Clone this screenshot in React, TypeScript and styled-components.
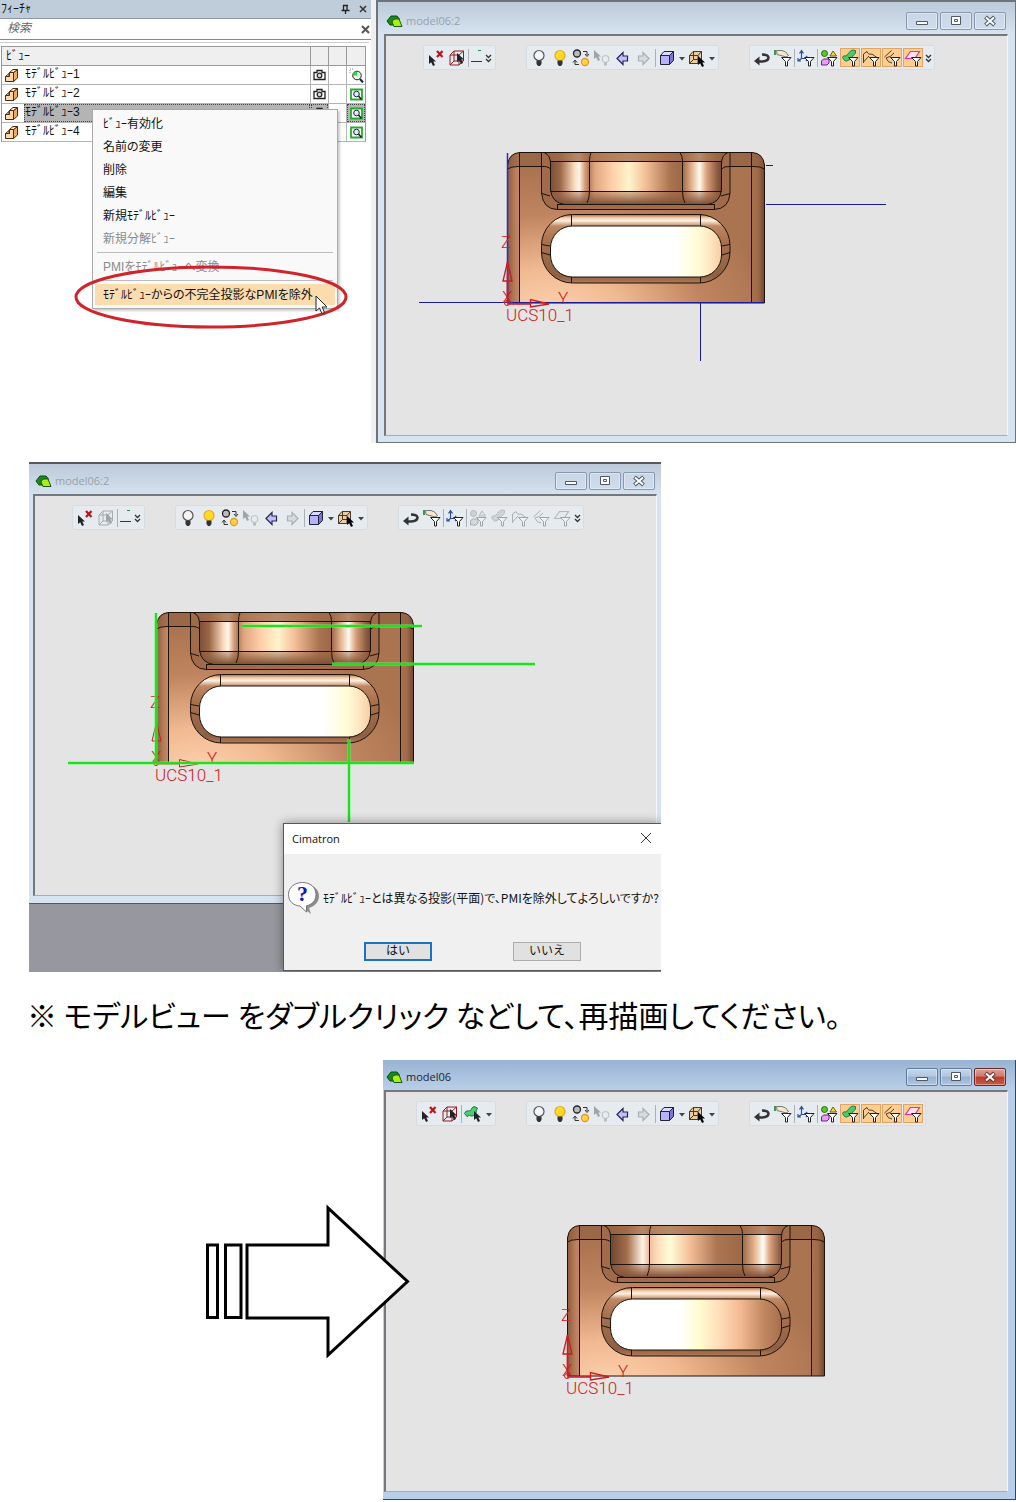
import React from 'react';
import styled, { createGlobalStyle, css } from 'styled-components';

const uiFont = `"Open Sans", "Noto Sans CJK JP", sans-serif`;
const jpFont = `"Liberation Sans", "Noto Sans CJK JP", sans-serif`;
const cjkFont = `"Noto Sans CJK JP", sans-serif`;

const GlobalStyle = createGlobalStyle`
  * { box-sizing: border-box; }
  body { margin: 0; background: #fff; color: #111; font-family: ${jpFont}; font-size: 12px; }
  button, input { font: inherit; color: inherit; }
  svg { display: block; flex: none; }
`;

/* ---------- page ---------- */

const Page = styled.main`
  display: flex;
  flex-direction: column;
  padding-bottom: 2px;
`;

const TopRow = styled.section`
  display: flex;
`;

const MiddleRow = styled.section`
  position: relative;
  margin: 19px 0 0 29px;
  max-width: 632px;
  padding-bottom: 68px;
  background: #97979f;
  overflow: hidden;
`;

const Note = styled.p`
  margin: 0;
  padding: 0 0 4px 27px;
  font-family: ${cjkFont};
  font-size: 30px;
  line-height: 84px;
  white-space: nowrap;
  color: #000;
  font-feature-settings: 'palt';
`;

const BottomRow = styled.section`
  display: flex;
`;

const ArrowArea = styled.div`
  flex: 0 0 383px;
  display: flex;
  justify-content: flex-end;
  padding-top: 144px;
  svg { position: relative; z-index: 1; overflow: visible; margin-right: -27px; }
`;

/* ---------- feature panel ---------- */

const Side = styled.aside`
  position: relative;
  flex: 0 0 376px;
  background: #fff;
  border-right: 5px solid #f0f0f0;
`;

const SideHeader = styled.header`
  display: flex;
  align-items: center;
  height: 19px;
  padding: 0 0 0 1px;
  background: #bfcddb;
  border-bottom: 1px solid #8d99a5;
  font-size: 12px;
  line-height: 16px;
  span { flex: 1; }
`;

const PlainButton = styled.button<{ $w?: number }>`
  display: flex;
  align-items: center;
  justify-content: center;
  width: ${p => p.$w ?? 17}px;
  height: 17px;
  padding: 0;
  border: 0;
  background: none;
`;

const SearchRow = styled.div`
  display: flex;
  align-items: center;
  height: 21px;
  padding-left: 7px;
  border-bottom: 1px solid #888;
`;

const SearchInput = styled.input`
  flex: 1;
  min-width: 0;
  height: 18px;
  padding: 0 0 2px;
  border: 0;
  outline: 0;
  font-size: 12px;
  line-height: 16px;
  &::placeholder { color: #666; font-style: italic; opacity: 1; }
`;

const ListFrame = styled.div`
  margin: 2px 2px 0 0;
  padding: 3px 3px 0 1px;
  border-top: 1px solid #ccc;
`;

const Table = styled.table`
  width: 100%;
  table-layout: fixed;
  border-collapse: separate;
  border-spacing: 0;
  border: 1px solid #999;
  border-bottom: 0;
  th, td {
    height: 19px;
    padding: 0;
    border-right: 1px solid #b4b4b4;
    border-bottom: 1px solid #b4b4b4;
    font-size: 12px;
    font-weight: 400;
    line-height: 16px;
    text-align: left;
  }
  th { background: #efefef; border-color: #999; padding-left: 4px; }
  th:last-child, td:last-child { border-right: 0; }
`;

const NameCol = styled.col``;
const IconCol = styled.col`
  width: 18px;
`;

const NameCell = styled.div`
  display: flex;
  align-items: center;
  height: 18px;
  padding-left: 2px;
`;

const NameText = styled.span<{ $selected?: boolean }>`
  flex: 1;
  height: 18px;
  margin-left: 4px;
  padding-left: 1px;
  ${p => p.$selected && css`
    background: #b4b4b4;
    outline: 1px dotted #444;
    outline-offset: -1px;
  `}
`;

const IconCell = styled.div<{ $selected?: boolean }>`
  display: flex;
  align-items: center;
  justify-content: center;
  height: 18px;
  ${p => p.$selected && css`
    background: #b4b4b4;
    outline: 1px dotted #444;
    outline-offset: -1px;
  `}
`;

const Menu = styled.menu`
  position: absolute;
  left: 92px;
  top: 109px;
  width: 246px;
  margin: 0;
  padding: 2px;
  list-style: none;
  background: #f9f9f9;
  border: 1px solid #aaa;
  box-shadow: 2px 2px 2px #0003;
`;

const MenuItem = styled.button<{ $active?: boolean }>`
  display: block;
  width: 100%;
  height: 23px;
  padding: 0 0 0 8px;
  border: 0;
  border-block: 1px solid transparent;
  background: ${p => (p.$active ? '#fbdcae' : 'none')};
  background-clip: padding-box;
  font-size: 12px;
  line-height: 20px;
  text-align: left;
  white-space: nowrap;
  font-feature-settings: 'palt';
  &:disabled { color: #8b8b8b; }
`;

const MenuRule = styled.li`
  height: 5px;
  margin: 0 2px;
  padding-top: 2px;
  &::before { content: ''; display: block; height: 1px; background: #bdbdbd; }
`;

const Ring = styled.svg`
  position: absolute;
  left: 74px;
  top: 264px;
  z-index: 2;
`;

const Cursor = styled.svg`
  position: absolute;
  left: 315px;
  top: 295px;
  z-index: 3;
`;

/* ---------- document window ---------- */

type FrameKind = 'first' | 'second' | 'third';

const frames = {
  first: css`
    flex: 1;
    border: solid #6e7478;
    border-width: 2px 1px 1px 2px;
    padding: 0 7px 6px 6px;
    background: linear-gradient(#bccad9, #d6e3f0 32px);
  `,
  second: css`
    border: solid #55585c;
    border-width: 2px 0 1px;
    padding: 0 4px 7px 4px;
    background: linear-gradient(#bccad9, #d6e3f0 32px);
  `,
  third: css`
    flex: 1;
    border: solid #2b4a62;
    border-width: 0 1px 1px 0;
    padding: 0 7px 7px 1px;
    background: linear-gradient(#98b3d1, #b9cfe9 30px);
  `,
};

const Frame = styled.article<{ $kind: FrameKind }>`
  min-width: 0;
  ${p => frames[p.$kind]}
`;

const TitleBar = styled.header<{ $kind: FrameKind }>`
  display: flex;
  align-items: center;
  height: ${p => (p.$kind === 'first' ? 32 : 30)}px;
  padding: ${p => (p.$kind === 'first' ? 6 : 4)}px 2px 0;
  font-family: ${uiFont};
  color: ${p => (p.$kind === 'third' ? '#1c2530' : '#98a1aa')};
`;

const Title = styled.h2`
  flex: 1;
  margin: 0 0 0 3px;
  font-size: 11px;
  font-weight: 400;
  line-height: 16px;
`;

const WinButtons = styled.div`
  display: flex;
  gap: 2px;
`;

const WinButton = styled.button<{ $red?: boolean; $strong?: boolean }>`
  display: flex;
  align-items: center;
  justify-content: center;
  width: 32px;
  height: 18px;
  padding: 0;
  border-radius: 2px;
  border: 1px solid ${p => (p.$red ? '#6a2a2c' : p.$strong ? '#607c9c' : '#8798b0')};
  box-shadow: inset 0 0 0 1px #ffffff66;
  background: ${p =>
    p.$red
      ? 'linear-gradient(#dba299, #cf7a6c 45%, #b83c2b 50%, #c85a40)'
      : p.$strong
      ? 'linear-gradient(#c4d6ea, #b2c8e0 45%, #96b1d0 50%, #afc6e2)'
      : 'linear-gradient(#c8d6e5, #cfdceb)'};
`;

const Body = styled.div`
  min-height: 402px;
  padding: 9px 0 0;
  border: solid #74787c;
  border-width: 2px 1px 1px 2px;
  border-right-color: #f4f6f8;
  border-bottom-color: #a7adb3;
  background: #e4e4e4;
  overflow: hidden;
`;

const Toolbars = styled.div<{ $indent: number }>`
  display: flex;
  gap: 30px;
  padding-left: ${p => p.$indent}px;
`;

const Toolbar = styled.div`
  display: flex;
  align-items: center;
  gap: 1px;
  height: 25px;
  padding: 0 2px;
  border: 1px solid #d5dde4;
  border-radius: 2px;
  background: #e6ebf0;
`;

const Tool = styled.button<{ $w?: number; $on?: boolean }>`
  display: flex;
  align-items: center;
  justify-content: center;
  width: ${p => p.$w ?? 20}px;
  height: 19px;
  padding: 0;
  border: ${p => (p.$on ? '1px solid #e2a367' : '0')};
  background: ${p => (p.$on ? '#fdce92' : 'none')};
  svg { flex: none; }
  &:disabled svg { filter: grayscale(1); opacity: 0.35; }
`;

const Divider = styled.span`
  width: 1px;
  height: 18px;
  background: #a9b0b7;
`;

const Canvas = styled.div<{ $left: number; $top: number }>`
  padding: ${p => p.$top}px 0 0 ${p => p.$left}px;
  svg { overflow: visible; }
`;

/* ---------- message box ---------- */

const Dialog = styled.div`
  position: absolute;
  left: 254px;
  right: 0;
  bottom: 1px;
  height: 148px;
  border: 1px solid #55585c;
  border-right: 0;
  background: #f0f0f0;
  box-shadow: 0 0 10px #0006;
`;

const DialogTitle = styled.header`
  display: flex;
  align-items: center;
  justify-content: space-between;
  height: 30px;
  padding: 0 7px 2px 8px;
  background: #fff;
  font-family: ${uiFont};
  font-size: 11px;
`;

const DialogMessage = styled.div`
  display: flex;
  align-items: center;
  gap: 3px;
  height: 88px;
  padding-left: 3px;
  font-family: ${cjkFont};
  font-size: 12px;
  line-height: 16px;
  white-space: nowrap;
  font-feature-settings: 'palt';
`;

const DialogButtons = styled.div`
  display: flex;
  gap: 81px;
  padding-left: 80px;
`;

const DialogButton = styled.button<{ $primary?: boolean }>`
  width: 68px;
  height: 19px;
  padding: 0 0 2px;
  border: ${p => (p.$primary ? '2px solid #1b74bb' : '1px solid #adadad')};
  background: #e1e1e1;
  font-size: 12px;
  line-height: 12px;
`;

/* ---------- icons ---------- */

const Icon = ({ children, w = 18, h = 18 }: { children: React.ReactNode; w?: number; h?: number }) => (
  <svg width={w} height={h} viewBox={`0 0 ${w} ${h}`} fill="none" aria-hidden="true">{children}</svg>
);

const Pointer = ({ x, y, fill = '#222' }: { x: number; y: number; fill?: string }) => (
  <path transform={`translate(${x} ${y})`} d="M0 0V9L2.200 7.200L4 11L6 10L4.300 6.500H7Z" fill={fill} />
);

const Funnel = () => (
  <path d="M7.500 8.500H17L13.500 12.500V17H11.500V12.500Z" fill="#fff" stroke="#222" />
);

const DeselectIcon = () => (
  <Icon><Pointer x={2} y={6} /><path d="M10 2L15.500 8M15.500 2L10 8" stroke="#b8141c" strokeWidth="2.200" /></Icon>
);

const BoxSelectIcon = () => (
  <Icon>
    <path d="M2 6H11V16H2ZM2 6L6 2H15.500L11 6M15.500 2V12L11 16M6 2V12H15M6 12L2 16" stroke="#8d1d24" />
    <Pointer x={9} y={4} />
  </Icon>
);

const SurfaceSelectIcon = () => (
  <Icon w={20}>
    <path d="M1.500 8.500Q3 5 5 6Q8 7 9 3L11 1.500L14.500 3Q13 5 13 8Q11 12 8 11Q5 9 4.500 12Z" fill="#49cf78" stroke="#1a7a3a" />
    <Pointer x={11} y={6} />
  </Icon>
);

const LineIcon = () => (
  <Icon w={13}><path d="M1 12.500H12" stroke="#333" /><path d="M8 1.500H11" stroke="#2a8a4a" /></Icon>
);

const ChevronsIcon = () => (
  <Icon w={9}><path d="M2 6L4.500 8.500L7 6M2 10L4.500 12.500L7 10" stroke="#333" strokeWidth="1.300" /></Icon>
);

const CaretIcon = () => (
  <Icon w={8}><path d="M1 8H7L4 11.500Z" fill="#444" /></Icon>
);

const BulbIcon = ({ lit }: { lit?: boolean }) => (
  <Icon>
    <circle cx="9" cy="6.500" r="5" fill={lit ? '#ffdc22' : '#f4f4f4'} stroke={lit ? '#eda52a' : '#555'} strokeWidth="1.200" />
    <path d="M6.500 11.500H11.500V15L10 17H8L6.500 15Z" fill="#333" />
  </Icon>
);

const SwapIcon = () => (
  <Icon>
    <circle cx="5" cy="4.500" r="3.500" fill="#bbb" stroke="#222" strokeWidth="1.300" />
    <circle cx="13" cy="13" r="3.500" fill="#ffd44a" stroke="#e8962a" strokeWidth="1.300" />
    <path d="M11 2.500H15V6M13 5L15 7.500L17 5M7 15.500H3V12M1 13.500L3 11L5 13.500" stroke="#333" />
  </Icon>
);

const PointBulbIcon = () => (
  <Icon>
    <Pointer x={1} y={1} />
    <circle cx="12.500" cy="10" r="3.500" stroke="#666" />
    <path d="M11 13.500H14V16.500H11Z" fill="#666" />
  </Icon>
);

const ArrowIcon = ({ right }: { right?: boolean }) => (
  <Icon>
    <path
      transform={right ? 'translate(17 0) scale(-1 1)' : undefined}
      d="M3 9.500L9 3.500V7H13.500V12H9V15.500Z"
      fill={right ? '#bbb' : '#c3bdff'}
      stroke={right ? '#444' : '#262650'}
      strokeWidth="1.200"
    />
  </Icon>
);

const CubeIcon = () => (
  <Icon>
    <path d="M2.500 6.500H11.500V15.500H2.500Z" fill="#b8b2fb" stroke="#222238" />
    <path d="M2.500 6.500L6 2.500H15.500L11.500 6.500Z" fill="#dcd9ff" stroke="#222238" />
    <path d="M11.500 6.500L15.500 2.500V11.500L11.500 15.500Z" fill="#7c74d8" stroke="#222238" />
  </Icon>
);

const CubePickIcon = () => (
  <Icon>
    <path d="M1 6.500L5 2.500H13.500V11L10 14.500H1Z" fill="#e9cca2" />
    <path d="M1.500 6.500H10V14.500H1.500ZM1.500 6.500L5 2.500H13.500L10 6.500M13.500 2.500V11L10 14.500M5.500 2.500V10.500H13M5.500 10.500L1.500 14.500" stroke="#4a3824" />
    <Pointer x={10} y={7} fill="#000" />
  </Icon>
);

const ReturnIcon = () => (
  <Icon>
    <path d="M5 12.500H9Q15.500 12 15.500 8.500Q15 5.500 9 5.500" stroke="#333" strokeWidth="2.500" />
    <path d="M1 12L6.500 7.500V16.500Z" fill="#333" />
  </Icon>
);

const HandFilterIcon = () => (
  <Icon>
    <path d="M0 1H2V6H0Z" fill="#3a9a4a" />
    <path d="M2.500 1.500H8Q12 2 14.500 6.500L12 8L7 6.500L3 5.500Z" fill="#f5e6cf" stroke="#777" />
    <Funnel />
  </Icon>
);

const AxesFilterIcon = () => (
  <Icon>
    <path d="M4.500 2V9.500H11M4.500 9.500L1 12M2.500 4.500L4.500 1.500L6.500 4.500M9 7L11.500 9.500L9 12M1 9V12H4" stroke="#2c4fa0" strokeWidth="1.200" />
    <Funnel />
  </Icon>
);

const ShapesFilterIcon = () => (
  <Icon>
    <circle cx="4.500" cy="4.500" r="3" fill="#5dc81e" stroke="#2a6a10" />
    <path d="M10 7L13 2L16.500 7Z" fill="#f0dc3c" stroke="#6a5c10" />
    <path d="M1.500 12L3.500 10H9V14L7 16H1.500Z" fill="#e3a2f0" stroke="#7a1a90" />
    <Funnel />
  </Icon>
);

const SurfaceFilterIcon = () => (
  <Icon>
    <path d="M1.500 8.500Q2 6 5 7L10 1.500Q12 0.500 14.500 1.500V4L8 11Q5 13 3.500 11.500Z" fill="#4fc968" stroke="#23803a" />
    <Funnel />
  </Icon>
);

const CurveFilterIcon = () => (
  <Icon><path d="M1.500 14V5L5 2.500Q6 6 10 5L15.500 9M1.500 13L7 7" stroke="#4a3c2a" /><Funnel /></Icon>
);

const EdgeFilterIcon = () => (
  <Icon><path d="M1.500 8L8.500 1.500M3 9Q8 8 11 4M3 9Q5 14 9 14" stroke="#4a3c2a" /><Funnel /></Icon>
);

const PlaneFilterIcon = () => (
  <Icon><path d="M1.500 9.500L6.500 2.500H15.500L11 9.500Z" fill="#fbe0ee" stroke="#e0309a" strokeWidth="1.200" /><Funnel /></Icon>
);

const LogoIcon = () => (
  <Icon w={17} h={14}>
    <path d="M1 7L5 2H11L13.500 5L8 11H4Z" fill="#168a20" stroke="#0a4a10" />
    <path d="M6 8Q7 5 9 5H13L16 12.500H8Z" fill="#a8f01a" stroke="#1c5a10" />
  </Icon>
);

const PartIcon = () => (
  <Icon w={16} h={16}>
    <path d="M1.500 9.500L5.500 9.500V5.500H9.500L9.500 14.500H1.500Z" fill="#ffd9ae" stroke="#4a2a10" />
    <path d="M9.500 14.500V5.500L13.500 2.500V11Z" fill="#f5a95c" stroke="#4a2a10" />
    <path d="M5.500 5.500L9 2.500H13.500L9.500 5.500ZM1.500 9.500L5 6.500V9.500Z" fill="#ffe9d0" stroke="#4a2a10" />
  </Icon>
);

const CameraIcon = () => (
  <Icon w={13} h={13}>
    <path d="M1 3.500H4V1.500H9V3.500H12V10.500H1Z" fill="#fff" stroke="#222" strokeWidth="1.300" />
    <circle cx="6.500" cy="6.500" r="2.300" fill="#ddd" stroke="#222" strokeWidth="1.300" />
  </Icon>
);

const ViewIcon = () => (
  <Icon w={13} h={13}>
    <path d="M1 1.500H12V11.500H1Z" fill="#fff" stroke="#1fae2c" strokeWidth="1.800" />
    <circle cx="6.500" cy="6" r="2.800" fill="#d9ecfa" stroke="#222" />
    <path d="M8.500 8L11.500 11.500" stroke="#222" strokeWidth="1.600" />
  </Icon>
);

const ZoomViewIcon = () => (
  <Icon w={15} h={15}>
    <path d="M1 5V1H5" stroke="#999" strokeDasharray="1 1" />
    <circle cx="8" cy="7.500" r="4.300" fill="#e4f8e4" stroke="#223" />
    <path d="M8 3.500A4 4 0 0 0 4 7.500H8Z" fill="#22dd33" />
    <path d="M11 11L14 14.500" stroke="#222" strokeWidth="2" />
  </Icon>
);

const CloseMark = ({ size = 9, color = '#333', width = 1.5 }: { size?: number; color?: string; width?: number }) => (
  <Icon w={size} h={size}>
    <path d={`M1 1L${size - 1} ${size - 1}M${size - 1} 1L1 ${size - 1}`} stroke={color} strokeWidth={width} />
  </Icon>
);

const QuestionIcon = () => (
  <svg width="33" height="34" viewBox="0 0 33 34" aria-hidden="true">
    <path d="M17 3C26 3 32 8 32 15C32 21 28 25 22 27L24 33L16 27Z" fill="#8d8d8d" />
    <path d="M15.500 1.500C23 1.500 29 6 29 13.500C29 20 25 23.500 19.500 24.800V31L13 25C6 24.500 1.500 20 1.500 13.500C1.500 6 8 1.500 15.500 1.500Z" fill="#fff" stroke="#777" />
    <text x="15.500" y="20" textAnchor="middle" fontFamily="Liberation Serif, serif" fontWeight="700" fontSize="22" fill="#1414c8">?</text>
  </svg>
);

/* ---------- model drawing ---------- */

type Stop = [number, string];
const Stops = ({ list }: { list: Stop[] }) => (
  <>{list.map(([o, c], i) => <stop key={i} offset={o} stopColor={c} />)}</>
);

const pocketNear: Stop[] = [
  [0, '#7a4f37'], [0.06, '#9b6848'], [0.14, '#f8d8bc'], [0.17, '#fff6ea'], [0.2, '#dba47e'], [0.225, '#b27a56'],
  [0.26, '#e0a580'], [0.36, '#ffcfa9'], [0.46, '#fff3cc'], [0.56, '#f2bd95'], [0.7, '#a9734f'], [0.77, '#9c6846'],
  [0.82, '#e0ae88'], [0.87, '#fffaf0'], [0.91, '#dba27c'], [0.97, '#8f5e42'], [1, '#714730'],
];
const pocketFar: Stop[] = [
  [0, '#6b4530'], [0.1, '#a56f4c'], [0.19, '#fff3e4'], [0.225, '#eebd98'], [0.28, '#ffe0be'], [0.35, '#fffcd8'],
  [0.46, '#f5c19a'], [0.62, '#ad7652'], [0.77, '#9c6846'], [0.84, '#e6b590'], [0.89, '#fffdf6'], [0.93, '#dba27c'], [1, '#7a4f37'],
];
const slotNear: Stop[] = [[0, '#fff'], [0.72, '#fff'], [0.86, '#fffcd6'], [0.93, '#ffe8c4'], [1, '#f5cda4']];
const slotFar: Stop[] = [[0, '#fff'], [0.4, '#fff'], [0.52, '#fffcd0'], [0.64, '#ffdcb8'], [0.76, '#f2b992'], [0.9, '#c08660'], [1, '#a5704c']];

const Model = ({ kind }: { kind: FrameKind }) => {
  const far = kind === 'third';
  const id = (s: string) => `${kind}-${s}`;
  const url = (s: string) => `url(#${kind}-${s})`;
  return (
    <svg width="490" height="240" viewBox="0 0 490 240" fill="none" role="img" aria-label="model06">
      <defs>
        <radialGradient id={id('face')} gradientUnits="userSpaceOnUse" cx="0" cy="0" r="1" gradientTransform="translate(140 180) scale(220 150)">
          <Stops list={[[0, '#ffd7b4'], [0.35, '#f0b991'], [0.7, '#c08560'], [1, '#ab7450']]} />
        </radialGradient>
        <linearGradient id={id('left')}><Stops list={[[0, '#8d5c40'], [0.6, '#b67c58'], [1, '#c68c67']]} /></linearGradient>
        <linearGradient id={id('right')}><Stops list={[[0, '#a8714e'], [0.5, '#a16b49'], [1, '#6e4630']]} /></linearGradient>
        <linearGradient id={id('pocket')} gradientUnits="userSpaceOnUse" x1="140" x2="312" y1="0" y2="0"><Stops list={far ? pocketFar : pocketNear} /></linearGradient>
        <linearGradient id={id('slot')}><Stops list={far ? slotFar : slotNear} /></linearGradient>
        <linearGradient id={id('ring')} x2="0" y2="1">
          <Stops list={[[0, '#a36d4b'], [0.05, '#f6cfae'], [0.09, '#fff0e0'], [0.17, '#bf8762'], [0.4, '#a8714e'], [0.9, '#8f5f43'], [1, '#b07a56']]} />
        </linearGradient>
        <linearGradient id={id('floor')} x2="0" y2="1">
          <stop offset="0" stopColor="#a06a48" stopOpacity="0.350" />
          <stop offset="1" stopColor="#7c5037" />
        </linearGradient>
      </defs>

      <path d="M97.500 163V25Q99 13 110 12.500H342Q353 13 354.500 25V163Z" fill={url('face')} />
      <path d="M97.500 163V25Q99 13 109.500 12.500V163Z" fill={url('left')} />
      <path d="M341.500 12.500Q353 13 354.500 25V163H341.500Z" fill={url('right')} />
      <path d="M97.500 27Q99 13 110 12.500H131.500V26H110Q102 26 97.500 29ZM320 12.500H342Q353 13 354.500 27L342 26H320Z" fill="#8d5c40" fillOpacity="0.550" />
      <path d="M131.500 12.500V53Q133 69 147 69.500H304Q319 69 320 53V12.500Z" fill="#a06b4a" />
      <path d="M134 12.500Q140.500 15 140.500 24V50Q142 63 155 64H297Q310 63 311.500 50V24Q311.500 15 318 12.500Z" fill={url('pocket')} />
      <path d="M134 12.500Q140 15 140.500 21.500H311.500Q312 15 318 12.500Z" fill="#a06a48" fillOpacity="0.780" />
      <path d="M140.500 51Q142 63 155 64H297Q310 63 311.500 51Z" fill={url('floor')} />

      <rect x="131.500" y="74.500" width="188.500" height="68.500" rx="31" fill={url('ring')} />
      <rect x="140.500" y="86" width="171" height="51" rx="22" fill={url('slot')} />

      <g stroke="#1c120c">
        <path d="M97.500 163V25Q99 13 110 12.500H342Q353 13 354.500 25V163Z" />
        <path d="M109.500 12.500V163M341.500 12.500V163M97.500 29Q101 26.500 108 26.500H131Q138 26 140.500 29M354.500 29Q351 26.500 344 26.500H320Q314 26 311.500 29" />
        <path d="M131.500 12.500V53Q133 69 147 69.500H304Q319 69 320 53V12.500M134 12.500Q140.500 15 140.500 24V50Q142 63 155 64.500H297Q310 63 311.500 50V24Q311.500 15 318 12.500" />
        <path d="M140.500 21.500H311.500M140.500 51.500H311.500M181 12.500Q179.500 16 179.500 21V51Q179.500 58 177 63M270 12.500Q272.500 16 272.500 21V51Q272.500 59 275 63" />
        <path d="M147.500 64.500H304.500M147.500 64V69M304.500 64V69M132 53.500L140 56M320 53.500L311 56" />
        <rect x="131.500" y="74.500" width="188.500" height="68.500" rx="31" />
        <rect x="140.500" y="86" width="171" height="51" rx="22" />
        <path d="M161.500 74.500V86M290.500 74.500V86M161.500 137V143M290.500 137V143M131.500 104.500L140 106M131.500 112.500L140 115M320 104.500L312 106M320 112.500L312 115" />
      </g>

      {kind === 'first' && (
        <>
          <path d="M9 162.500H354M290.500 163V221M356 64.500H476M356 25.500H363" stroke="#1a1a9c" />
          <path d="M97.500 13V163" stroke="#2a2ac0" strokeWidth="1.500" />
        </>
      )}

      <g stroke="#cc1a20">
        <path d="M97.500 163V141M93 141L97.500 122L102 141ZM97 164H120M120.500 159.500V167L139 164Z" strokeWidth={kind === 'second' ? 1 : 1.3} />
        <circle cx="97" cy="163" r="2.500" />
      </g>
      {kind !== 'second' && <path d="M97.500 122V163" stroke="#cc1a20" strokeWidth="1.500" />}
      <g fill="#cc1a20" fontFamily="Roboto, sans-serif" fontWeight="300">
        <text x="91" y="108" fontSize="17">Z</text>
        <text x="148" y="164" fontSize="17">Y</text>
        <text x="92" y="163" fontSize="17">X</text>
        <text x="96" y="181" fontSize="17">UCS10_1</text>
      </g>

      {kind === 'second' && (
        <>
          <path d="M97 13V163M9 163H355M183 26H363M273 64H476M290 139V222" stroke="#5dff5d" strokeOpacity="0.450" strokeWidth="4" />
          <path d="M97 13V163M9 163H355M183 26H363M273 64H476M290 139V222" stroke="#22dd22" strokeWidth="2" />
        </>
      )}
    </svg>
  );
};

/* ---------- composed parts ---------- */

const DocWindow = ({ kind, title }: { kind: FrameKind; title: string }) => {
  const off = kind === 'second';
  const third = kind === 'third';
  const mark = { fill: '#fff', stroke: '#4c5866' };
  return (
    <Frame $kind={kind}>
      <TitleBar $kind={kind}>
        <LogoIcon />
        <Title>{title}</Title>
        <WinButtons>
          <WinButton $strong={third} aria-label="Minimize">
            <Icon w={12} h={12}><path d="M0.500 6.500H11.500V9.500H0.500Z" {...mark} /></Icon>
          </WinButton>
          <WinButton $strong={third} aria-label="Restore">
            <Icon w={12} h={12}><path d="M1.500 1.500H10.500V9.500H1.500Z" {...mark} /><path d="M4.500 4.500H7.500V6.500H4.500Z" {...mark} /></Icon>
          </WinButton>
          <WinButton $red={third} aria-label="Close">
            <Icon w={12} h={12}>
              <path d="M1.500 2L10.500 10M10.500 2L1.500 10" stroke={third ? '#6b3433' : '#4c5866'} strokeWidth="4" />
              <path d="M2 2.500L10 9.500M10 2.500L2 9.500" stroke="#fff" strokeWidth="2" />
            </Icon>
          </WinButton>
        </WinButtons>
      </TitleBar>
      <Body>
        <Toolbars $indent={third ? 30 : 37}>
          <Toolbar>
            <Tool aria-label="Deselect"><DeselectIcon /></Tool>
            <Tool aria-label="Select by box" disabled={off}><BoxSelectIcon /></Tool>
            <Divider />
            {third ? (
              <>
                <Tool aria-label="Select surface"><SurfaceSelectIcon /></Tool>
                <Tool $w={9} aria-label="Surface options"><CaretIcon /></Tool>
              </>
            ) : (
              <>
                <Tool $w={13} aria-label="Line"><LineIcon /></Tool>
                <Tool $w={9} aria-label="More selection tools"><ChevronsIcon /></Tool>
              </>
            )}
          </Toolbar>
          <Toolbar>
            <Tool aria-label="Hide"><BulbIcon /></Tool>
            <Tool aria-label="Show"><BulbIcon lit /></Tool>
            <Tool aria-label="Swap visibility"><SwapIcon /></Tool>
            <Tool aria-label="Hide picked" disabled><PointBulbIcon /></Tool>
            <Tool aria-label="Previous"><ArrowIcon /></Tool>
            <Tool aria-label="Next" disabled><ArrowIcon right /></Tool>
            <Divider />
            <Tool aria-label="Shading"><CubeIcon /></Tool>
            <Tool $w={8} aria-label="Shading options"><CaretIcon /></Tool>
            <Tool aria-label="Pick body"><CubePickIcon /></Tool>
            <Tool $w={8} aria-label="Pick options"><CaretIcon /></Tool>
          </Toolbar>
          <Toolbar>
            <Tool aria-label="Reset filter"><ReturnIcon /></Tool>
            <Tool aria-label="Filter by pick"><HandFilterIcon /></Tool>
            <Divider />
            <Tool aria-label="Filter UCS"><AxesFilterIcon /></Tool>
            <Divider />
            <Tool aria-label="Filter bodies" disabled={off}><ShapesFilterIcon /></Tool>
            <Tool aria-label="Filter faces" $on={!off} disabled={off}><SurfaceFilterIcon /></Tool>
            <Tool aria-label="Filter curves" $on={!off} disabled={off}><CurveFilterIcon /></Tool>
            <Tool aria-label="Filter edges" $on={!off} disabled={off}><EdgeFilterIcon /></Tool>
            <Tool aria-label="Filter planes" $on={!off} disabled={off}><PlaneFilterIcon /></Tool>
            {!third && <Tool $w={8} aria-label="More filters"><ChevronsIcon /></Tool>}
          </Toolbar>
        </Toolbars>
        <Canvas $left={third ? 84 : 24} $top={third ? 87 : 70}>
          <Model kind={kind} />
        </Canvas>
      </Body>
    </Frame>
  );
};

const rows = [
  { name: 'ﾓﾃﾞﾙﾋﾞｭｰ1', camera: true, zoomed: true },
  { name: 'ﾓﾃﾞﾙﾋﾞｭｰ2', camera: true },
  { name: 'ﾓﾃﾞﾙﾋﾞｭｰ3', camera: true, selected: true },
  { name: 'ﾓﾃﾞﾙﾋﾞｭｰ4' },
];

const FeaturePanel = () => (
  <Side>
    <SideHeader>
      <span>ﾌｨｰﾁｬ</span>
      <PlainButton aria-label="Pin">
        <Icon w={9} h={11}><path d="M2.500 1V6M6 1V6M2 1.500H7M0.500 6.500H8.500M4.500 7V10" stroke="#222" strokeWidth="1.300" /></Icon>
      </PlainButton>
      <PlainButton aria-label="Close"><CloseMark size={8} /></PlainButton>
    </SideHeader>
    <SearchRow>
      <SearchInput aria-label="検索" placeholder="検索" />
      <PlainButton $w={11} aria-label="Clear"><CloseMark size={9} color="#555" width={2} /></PlainButton>
    </SearchRow>
    <ListFrame>
      <Table>
        <colgroup><NameCol /><IconCol /><IconCol /><IconCol /></colgroup>
        <thead>
          <tr><th>ﾋﾞｭｰ</th><th /><th /><th /></tr>
        </thead>
        <tbody>
          {rows.map(r => (
            <tr key={r.name}>
              <td><NameCell><PartIcon /><NameText $selected={r.selected}>{r.name}</NameText></NameCell></td>
              <td><IconCell $selected={r.selected}>{r.camera && <CameraIcon />}</IconCell></td>
              <td />
              <td><IconCell $selected={r.selected}>{r.zoomed ? <ZoomViewIcon /> : <ViewIcon />}</IconCell></td>
            </tr>
          ))}
        </tbody>
      </Table>
    </ListFrame>
    <Menu>
      <li><MenuItem>ﾋﾞｭｰ有効化</MenuItem></li>
      <li><MenuItem>名前の変更</MenuItem></li>
      <li><MenuItem>削除</MenuItem></li>
      <li><MenuItem>編集</MenuItem></li>
      <li><MenuItem>新規ﾓﾃﾞﾙﾋﾞｭｰ</MenuItem></li>
      <li><MenuItem disabled>新規分解ﾋﾞｭｰ</MenuItem></li>
      <MenuRule />
      <li><MenuItem disabled>PMIをﾓﾃﾞﾙﾋﾞｭｰへ変換</MenuItem></li>
      <MenuRule />
      <li><MenuItem $active>ﾓﾃﾞﾙﾋﾞｭｰからの不完全投影なPMIを除外</MenuItem></li>
    </Menu>
    <Ring width="276" height="66" viewBox="0 0 276 66" fill="none" aria-hidden="true">
      <ellipse cx="137" cy="33" rx="135" ry="30" stroke="#d0232b" strokeWidth="3" />
    </Ring>
    <Cursor width="13" height="20" viewBox="0 0 13 20" aria-hidden="true">
      <path d="M1 1V16L4.500 13L7 18.500L9.500 17.500L7.200 12H12Z" fill="#fff" stroke="#222" />
    </Cursor>
  </Side>
);

export default function App() {
  return (
    <>
      <GlobalStyle />
      <Page>
        <TopRow>
          <FeaturePanel />
          <DocWindow kind="first" title="model06:2" />
        </TopRow>
        <MiddleRow>
          <DocWindow kind="second" title="model06:2" />
          <Dialog role="dialog" aria-label="Cimatron">
            <DialogTitle>
              Cimatron
              <PlainButton aria-label="Close"><CloseMark size={12} width={1} /></PlainButton>
            </DialogTitle>
            <DialogMessage>
              <QuestionIcon />
              <span>ﾓﾃﾞﾙﾋﾞｭｰとは異なる投影(平面)で、PMIを除外してよろしいですか?</span>
            </DialogMessage>
            <DialogButtons>
              <DialogButton $primary>はい</DialogButton>
              <DialogButton>いいえ</DialogButton>
            </DialogButtons>
          </Dialog>
        </MiddleRow>
        <Note>※ モデルビュー をダブルクリック などして、再描画してください。</Note>
        <BottomRow>
          <ArrowArea>
            <svg width="205" height="154" viewBox="0 0 205 154" fill="#fff" stroke="#000" strokeWidth="3" aria-hidden="true">
              <path d="M2.500 41H12.500V113.500H2.500ZM20.500 41H36V113.500H20.500ZM42 41H123V4L202.500 77.500L123 151V114H42Z" />
            </svg>
          </ArrowArea>
          <DocWindow kind="third" title="model06" />
        </BottomRow>
      </Page>
    </>
  );
}
